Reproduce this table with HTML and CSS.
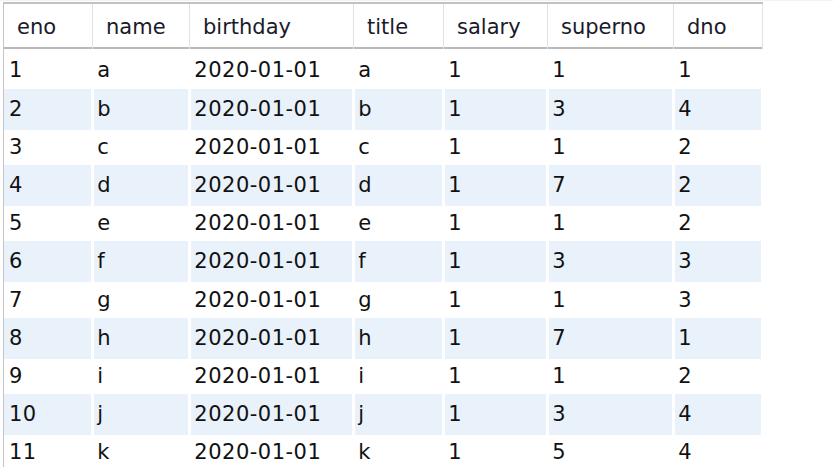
FILE: index.html
```html
<!DOCTYPE html>
<html>
<head>
<meta charset="utf-8">
<link rel="stylesheet" href="styles.css">
</head>
<body>
<div class="topline"></div>
<div class="grid">
  <div class="head">
    <div class="hc">eno</div><div class="hc">name</div><div class="hc">birthday</div><div class="hc">title</div><div class="hc">salary</div><div class="hc">superno</div><div class="hc">dno</div>
  </div>
  <div class="body">
    <div class="row"><div class="c">1</div><div class="c">a</div><div class="c">2020-01-01</div><div class="c">a</div><div class="c">1</div><div class="c">1</div><div class="c">1</div></div>
    <div class="row alt"><div class="c">2</div><div class="c">b</div><div class="c">2020-01-01</div><div class="c">b</div><div class="c">1</div><div class="c">3</div><div class="c">4</div></div>
    <div class="row"><div class="c">3</div><div class="c">c</div><div class="c">2020-01-01</div><div class="c">c</div><div class="c">1</div><div class="c">1</div><div class="c">2</div></div>
    <div class="row alt"><div class="c">4</div><div class="c">d</div><div class="c">2020-01-01</div><div class="c">d</div><div class="c">1</div><div class="c">7</div><div class="c">2</div></div>
    <div class="row"><div class="c">5</div><div class="c">e</div><div class="c">2020-01-01</div><div class="c">e</div><div class="c">1</div><div class="c">1</div><div class="c">2</div></div>
    <div class="row alt"><div class="c">6</div><div class="c">f</div><div class="c">2020-01-01</div><div class="c">f</div><div class="c">1</div><div class="c">3</div><div class="c">3</div></div>
    <div class="row"><div class="c">7</div><div class="c">g</div><div class="c">2020-01-01</div><div class="c">g</div><div class="c">1</div><div class="c">1</div><div class="c">3</div></div>
    <div class="row alt"><div class="c">8</div><div class="c">h</div><div class="c">2020-01-01</div><div class="c">h</div><div class="c">1</div><div class="c">7</div><div class="c">1</div></div>
    <div class="row"><div class="c">9</div><div class="c">i</div><div class="c">2020-01-01</div><div class="c">i</div><div class="c">1</div><div class="c">1</div><div class="c">2</div></div>
    <div class="row alt"><div class="c">10</div><div class="c">j</div><div class="c">2020-01-01</div><div class="c">j</div><div class="c">1</div><div class="c">3</div><div class="c">4</div></div>
    <div class="row"><div class="c">11</div><div class="c">k</div><div class="c">2020-01-01</div><div class="c">k</div><div class="c">1</div><div class="c">5</div><div class="c">4</div></div>
  </div>
</div>
</body>
</html>
```
FILE: styles.css
```css
html, body {
  margin: 0;
  padding: 0;
  background: #ffffff;
  overflow: hidden;
}
body {
  width: 833px;
  height: 467px;
  position: relative;
  font-family: "DejaVu Sans", Verdana, sans-serif;
  font-size: 21px;
  color: #111111;
}
.topline {
  position: absolute;
  left: 0;
  top: 0;
  width: 833px;
  height: 1px;
  background: #f2f2f2;
}
.grid {
  margin-left: 3px;
  margin-top: 2px;
  border-left: 1.5px solid #c4c4c4;
  height: 470px;
  width: 759px;
}
.head, .row {
  display: grid;
  grid-template-columns: 89px 97px 164px 90px 104px 126px 89px;
}
.head {
  border-top: 2px solid #c2c2c2;
  border-bottom: 2px solid #b8b8b8;
  height: 43px;
}
.hc {
  border-right: 1.5px solid #e2e2e2;
  padding-left: 13px;
  padding-top: 2px;
  line-height: 43px;
  color: #1a1a2a;
}
.body {
  display: flex;
  flex-direction: column;
  gap: 2px;
  padding-top: 1.4px;
}
.row {
  height: 36.2px;
}
.c {
  margin: 0 2.3px 0 1.3px;
  padding-left: 3px;
  line-height: 41px;
  letter-spacing: 0.5px;
  white-space: nowrap;
}
.row .c:first-child {
  margin-left: 0;
  padding-left: 5px;
}
.alt .c {
  background: #e9f1fb;
}
```
